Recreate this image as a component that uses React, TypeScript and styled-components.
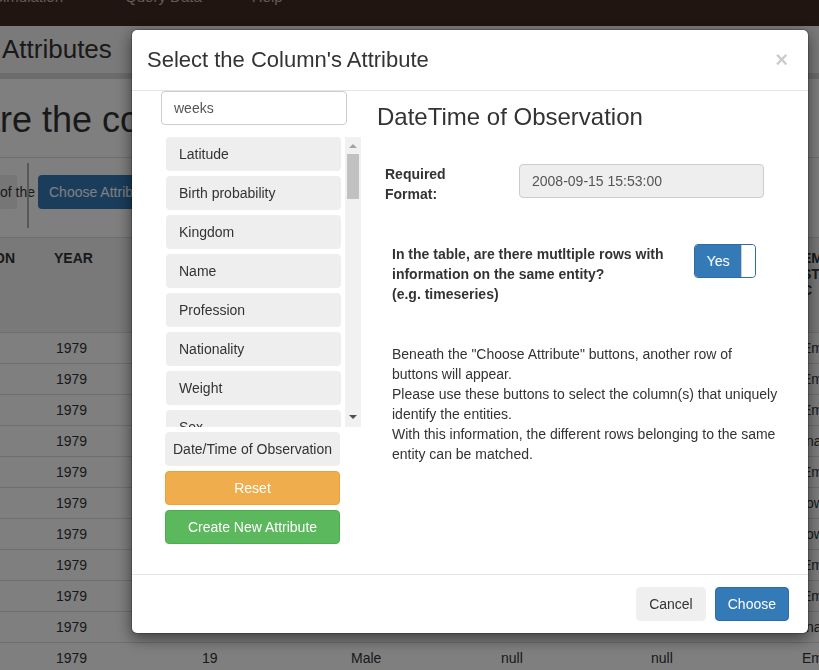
import React from "react";
import styled, { createGlobalStyle } from "styled-components";

const GlobalStyle = createGlobalStyle`
  html, body {
    margin: 0;
    padding: 0;
  }
  body {
    font-family: "Liberation Sans", Arial, sans-serif;
    font-size: 14px;
    color: #333;
    background: #fff;
    overflow: hidden;
  }
  * {
    box-sizing: border-box;
  }
`;

/* ---------- page under the dialog ---------- */

const Page = styled.div`
  width: 819px;
  height: 670px;
  overflow: hidden;
`;

const Navbar = styled.div`
  height: 26px;
  background: #402a20;
  display: flex;
  overflow: hidden;
`;

const NavItem = styled.span<{ $left: number }>`
  margin-left: ${({ $left }) => $left}px;
  margin-top: -13px;
  font-size: 15px;
  line-height: 20px;
  color: #c8b8a8;
  white-space: nowrap;
`;

const TitleBand = styled.div`
  height: 53px;
  background: #f5f5f5;
  border-bottom: 6px solid #d8d8d8;
  font-size: 26px;
  line-height: 47px;
  padding-left: 2px;
  color: #333;
`;

const HeadingBar = styled.div`
  height: 79px;
  border-bottom: 1px solid #ddd;
  overflow: hidden;
`;

const PageHeading = styled.h1`
  margin: 0 0 0 -92px;
  padding-top: 21px;
  font-size: 36px;
  font-weight: 500;
  line-height: 40px;
  white-space: nowrap;
`;

const Toolbar = styled.div`
  height: 79px;
  display: flex;
  align-items: flex-start;
  overflow: hidden;
`;

const GhostButton = styled.div`
  margin: 17px 0 0 -60px;
  width: 77px;
  height: 34px;
  padding-left: 60px;
  background: #ececec;
  border-radius: 4px;
  line-height: 34px;
  white-space: nowrap;
`;

const Divider = styled.div`
  margin: 5px 0 0 10px;
  width: 2px;
  height: 65px;
  background: #b0b0b0;
`;

const BlueButton = styled.div`
  margin: 17px 0 0 9px;
  height: 34px;
  padding: 0 12px 0 11px;
  background: #337ab7;
  border-radius: 4px;
  color: #fff;
  line-height: 34px;
  white-space: nowrap;
`;

const COLS = "46px 148px 149px 150px 150px 151px 200px";

const TableHead = styled.div`
  display: grid;
  grid-template-columns: ${COLS};
  height: 96px;
  background: #f3f3f3;
  border-top: 1px solid #ddd;
  border-bottom: 1px solid #ddd;
`;

const HeadCell = styled.div`
  padding: 12px 8px 0;
  font-weight: bold;
  line-height: 16px;
  text-transform: uppercase;
  white-space: nowrap;
  overflow: hidden;
`;

const FirstHeadCell = styled(HeadCell)`
  padding-left: 0;
  text-indent: -6px;
`;

const TableRow = styled.div`
  display: grid;
  grid-template-columns: ${COLS};
  height: 31px;
  border-bottom: 1px solid #ddd;
`;

const Cell = styled.div`
  padding: 5px 8px;
  line-height: 20px;
  white-space: nowrap;
  overflow: hidden;
`;

const YearCell = styled(Cell)`
  padding-left: 10px;
`;

/* ---------- dialog ---------- */

const Backdrop = styled.div`
  position: fixed;
  inset: 0;
  background: rgba(0, 0, 0, 0.5);
  padding: 29px 0 0 131px;
`;

const Dialog = styled.div`
  width: 678px;
  background: #fff;
  background-clip: padding-box;
  border: 1px solid rgba(0, 0, 0, 0.2);
  border-radius: 6px;
  box-shadow: 0 5px 15px rgba(0, 0, 0, 0.5);
`;

const DialogHeader = styled.div`
  height: 61px;
  padding: 0 15px;
  border-bottom: 1px solid #e5e5e5;
  display: flex;
  align-items: center;
  justify-content: space-between;
`;

const DialogTitle = styled.h4`
  margin: 0;
  font-size: 22px;
  font-weight: 500;
  line-height: 28px;
  color: #333;
`;

const CloseButton = styled.span`
  margin-right: 5px;
  font-size: 22px;
  font-weight: bold;
  line-height: 1;
  color: #000;
  opacity: 0.2;
`;

const DialogBody = styled.div`
  display: flex;
  padding: 0 15px 30px;
`;

const LeftCol = styled.div`
  width: 215px;
  padding: 0 15px 0 14px;
`;

const SearchInput = styled.div`
  height: 34px;
  padding: 0 12px;
  border: 1px solid #ccc;
  border-radius: 4px;
  line-height: 32px;
  color: #555;
`;

const ListBox = styled.div`
  margin: 12px -14px 0 4px;
  height: 290px;
  display: flex;
`;

const ListItems = styled.div`
  flex: 1;
  overflow: hidden;
  padding-left: 1px;
`;

const ListItem = styled.div`
  width: 175px;
  height: 34px;
  margin-bottom: 5px;
  padding: 0 13px;
  background: #eee;
  border-radius: 4px;
  line-height: 34px;
  color: #333;
`;

const Scrollbar = styled.div`
  width: 16px;
  background: #f1f1f1;
  display: flex;
  flex-direction: column;
  align-items: center;
  padding: 7px 0 8px;
`;

const Arrow = styled.div<{ $down?: boolean }>`
  width: 0;
  height: 0;
  border-left: 4px solid transparent;
  border-right: 4px solid transparent;
  ${({ $down }) =>
    $down ? "border-top: 4px solid #505050;" : "border-bottom: 4px solid #a3a3a3;"}
`;

const Thumb = styled.div`
  margin-top: 6px;
  width: 12px;
  height: 45px;
  background: #c1c1c1;
`;

const Spacer = styled.div`
  flex: 1;
`;

type Tone = "plain" | "warning" | "success";

const toneColors: Record<Tone, [string, string, string]> = {
  plain: ["#eee", "#eee", "#333"],
  warning: ["#f0ad4e", "#eea236", "#fff"],
  success: ["#5cb85c", "#4cae4c", "#fff"],
};

const SideButton = styled.div<{ $tone: Tone }>`
  margin: 5px 0 0 4px;
  width: 175px;
  height: 34px;
  border-radius: 4px;
  text-align: center;
  line-height: 32px;
  background: ${({ $tone }) => toneColors[$tone][0]};
  border: 1px solid ${({ $tone }) => toneColors[$tone][1]};
  color: ${({ $tone }) => toneColors[$tone][2]};
`;

const RightCol = styled.div`
  flex: 1;
  padding: 0 15px;
`;

const SectionTitle = styled.h3`
  margin: 13px 0 0;
  font-size: 24px;
  font-weight: 500;
  line-height: 26px;
  color: #333;
`;

const FormRow = styled.div`
  margin-top: 34px;
  display: flex;
`;

const FieldLabel = styled.div`
  width: 142px;
  padding: 0 40px 0 8px;
  font-weight: bold;
  line-height: 20px;
`;

const ReadonlyInput = styled.div`
  width: 245px;
  height: 34px;
  padding: 0 12px;
  background: #eee;
  border: 1px solid #ccc;
  border-radius: 4px;
  line-height: 32px;
  color: #555;
`;

const QuestionRow = styled.div`
  margin-top: 40px;
  display: flex;
`;

const Question = styled.div`
  width: 317px;
  padding-left: 15px;
  font-size: 14px;
  font-weight: bold;
  line-height: 20px;
  white-space: nowrap;
`;

const Toggle = styled.div`
  width: 62px;
  height: 34px;
  border: 1px solid #2e6da4;
  border-radius: 4px;
  overflow: hidden;
  display: flex;
`;

const ToggleLabel = styled.div`
  flex: 1;
  background: #337ab7;
  color: #fff;
  text-align: center;
  line-height: 32px;
`;

const ToggleHandle = styled.div`
  width: 14px;
  background: #fff;
  border-left: 1px solid #ccc;
  border-radius: 0 3px 3px 0;
`;

const HelpText = styled.p`
  margin: 40px 0 0;
  padding-left: 15px;
  font-size: 14px;
  line-height: 20px;
  white-space: nowrap;
`;

const DialogFooter = styled.div`
  padding: 12px 19px;
  border-top: 1px solid #e5e5e5;
  display: flex;
  justify-content: flex-end;
  gap: 9px;
`;

const FooterButton = styled.div<{ $primary?: boolean }>`
  height: 34px;
  padding: 0 12px;
  border-radius: 4px;
  line-height: 32px;
  background: ${({ $primary }) => ($primary ? "#337ab7" : "#efefef")};
  border: 1px solid ${({ $primary }) => ($primary ? "#2e6da4" : "#efefef")};
  color: ${({ $primary }) => ($primary ? "#fff" : "#333")};
`;

const attributes = [
  "Latitude",
  "Birth probability",
  "Kingdom",
  "Name",
  "Profession",
  "Nationality",
  "Weight",
  "Sex",
  "Age",
];

const statuses = [
  "Employed",
  "Employed",
  "Employed",
  "Inactive",
  "Employed",
  "Iowa",
  "Iowa",
  "Employed",
  "Employed",
  "Inactive",
  "Employed",
];

export default function App() {
  return (
    <>
      <GlobalStyle />
      <Page>
        <Navbar>
          <NavItem $left={-7}>Simulation</NavItem>
          <NavItem $left={62}>Query Data</NavItem>
          <NavItem $left={50}>Help</NavItem>
        </Navbar>
        <TitleBand>Attributes</TitleBand>
        <HeadingBar>
          <PageHeading>Declare the columns' attributes</PageHeading>
        </HeadingBar>
        <Toolbar>
          <GhostButton>of the Name</GhostButton>
          <Divider />
          <BlueButton>Choose Attribute</BlueButton>
        </Toolbar>
        <TableHead>
          <FirstHeadCell>ON</FirstHeadCell>
          <HeadCell>Year</HeadCell>
          <HeadCell>Age</HeadCell>
          <HeadCell>Sex</HeadCell>
          <HeadCell>Weight</HeadCell>
          <HeadCell>Height</HeadCell>
          <HeadCell>
            EM
            <br />
            ST
            <br />
            C
          </HeadCell>
        </TableHead>
        {statuses.map((status, i) => (
          <TableRow key={i}>
            <Cell />
            <YearCell>1979</YearCell>
            <Cell>19</Cell>
            <Cell>Male</Cell>
            <Cell>null</Cell>
            <Cell>null</Cell>
            <Cell>{status}</Cell>
          </TableRow>
        ))}
      </Page>

      <Backdrop>
        <Dialog>
          <DialogHeader>
            <DialogTitle>Select the Column's Attribute</DialogTitle>
            <CloseButton>×</CloseButton>
          </DialogHeader>
          <DialogBody>
            <LeftCol>
              <SearchInput>weeks</SearchInput>
              <ListBox>
                <ListItems>
                  {attributes.map((a) => (
                    <ListItem key={a}>{a}</ListItem>
                  ))}
                </ListItems>
                <Scrollbar>
                  <Arrow />
                  <Thumb />
                  <Spacer />
                  <Arrow $down />
                </Scrollbar>
              </ListBox>
              <SideButton $tone="plain">Date/Time of Observation</SideButton>
              <SideButton $tone="warning">Reset</SideButton>
              <SideButton $tone="success">Create New Attribute</SideButton>
            </LeftCol>
            <RightCol>
              <SectionTitle>DateTime of Observation</SectionTitle>
              <FormRow>
                <FieldLabel>Required Format:</FieldLabel>
                <ReadonlyInput>2008-09-15 15:53:00</ReadonlyInput>
              </FormRow>
              <QuestionRow>
                <Question>
                  In the table, are there mutltiple rows with
                  <br />
                  information on the same entity?
                  <br />
                  (e.g. timeseries)
                </Question>
                <Toggle>
                  <ToggleLabel>Yes</ToggleLabel>
                  <ToggleHandle />
                </Toggle>
              </QuestionRow>
              <HelpText>
                Beneath the "Choose Attribute" buttons, another row of
                <br />
                buttons will appear.
                <br />
                Please use these buttons to select the column(s) that uniquely
                <br />
                identify the entities.
                <br />
                With this information, the different rows belonging to the same
                <br />
                entity can be matched.
              </HelpText>
            </RightCol>
          </DialogBody>
          <DialogFooter>
            <FooterButton>Cancel</FooterButton>
            <FooterButton $primary>Choose</FooterButton>
          </DialogFooter>
        </Dialog>
      </Backdrop>
    </>
  );
}
